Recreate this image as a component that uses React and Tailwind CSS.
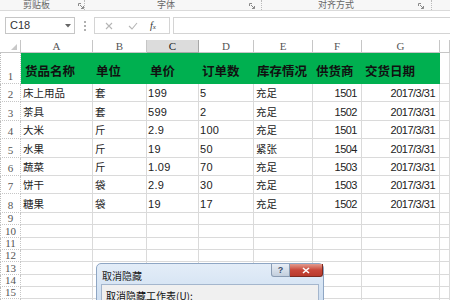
const cols = [21, 72, 54, 52, 55, 59, 49, 78]
const letters = ['A', 'B', 'C', 'D', 'E', 'F', 'G']

const head = ['货品名称', '单位', '单价', '订单数', '库存情况', '供货商', '交货日期']

const data = [
  ['床上用品', '套', '199', '5', '充足', '1501', '2017/3/31'],
  ['茶具', '套', '599', '2', '充足', '1502', '2017/3/31'],
  ['大米', '斤', '2.9', '100', '充足', '1501', '2017/3/31'],
  ['水果', '斤', '19', '50', '紧张', '1504', '2017/3/31'],
  ['蔬菜', '斤', '1.09', '70', '充足', '1503', '2017/3/31'],
  ['饼干', '袋', '2.9', '30', '充足', '1503', '2017/3/31'],
  ['糖果', '袋', '19', '17', '充足', '1502', '2017/3/31'],
]

const cjk = "font-['Noto_Sans_CJK_SC',sans-serif]"

const Launcher = () => (
  <svg width="6" height="6" viewBox="0 0 6 6" className="shrink-0">
    <path d="M0.5 0.5 H3 M0.5 0.5 V3" stroke="#8a8a8a" strokeWidth="1" fill="none" />
    <path d="M2 2 L5.5 5.5 M5.5 3 V5.5 H3" stroke="#8a8a8a" strokeWidth="1" fill="none" />
  </svg>
)

const Ribbon = () => (
  <div className={`h-[11px] flex items-start border-b border-[#dadada] bg-[#f7f7f7] text-[9px] leading-[10px] text-[#666] ${cjk}`}>
    <div className="w-[85px] h-full flex items-start border-r border-dotted border-[#bbb]">
      <span className="ml-[23px]">剪贴板</span>
      <span className="ml-[28px] mt-[3px]"><Launcher /></span>
    </div>
    <div className="w-[177px] h-full flex items-start border-r border-dotted border-[#bbb]">
      <span className="ml-[72px]">字体</span>
      <span className="ml-[74px] mt-[3px]"><Launcher /></span>
    </div>
    <div className="w-[170px] h-full flex items-start border-r border-dotted border-[#bbb]">
      <span className="ml-[56px]">对齐方式</span>
      <span className="ml-[64px] mt-[3px]"><Launcher /></span>
    </div>
  </div>
)

const FormulaBar = () => (
  <div className="h-[29px] flex items-start pt-[6px]">
    <div className="ml-[5px] w-[70px] h-[17px] border border-[#c6c6c6] bg-white flex items-center justify-between pl-[4px] pr-[3px]">
      <span className="text-[11px] text-[#333] font-['Liberation_Sans',sans-serif]">C18</span>
      <svg width="6" height="4" viewBox="0 0 6 4"><path d="M0 0 H6 L3 3.5 Z" fill="#666" /></svg>
    </div>
    <div className="ml-[9px] h-[17px] flex flex-col justify-center gap-[2px]">
      <span className="block w-[2px] h-[2px] bg-[#b0b0b0]" />
      <span className="block w-[2px] h-[2px] bg-[#b0b0b0]" />
      <span className="block w-[2px] h-[2px] bg-[#b0b0b0]" />
    </div>
    <div className="ml-[8px] w-[76px] h-[17px] border border-[#d4d4d4] bg-white flex items-center">
      <svg width="8" height="8" viewBox="0 0 8 8" className="ml-[10px]">
        <path d="M1 1 L7 7 M7 1 L1 7" stroke="#b5b5b5" strokeWidth="1.1" />
      </svg>
      <svg width="10" height="8" viewBox="0 0 10 8" className="ml-[15px]">
        <path d="M1 4 L4 7 L9 1" stroke="#b5b5b5" strokeWidth="1.1" fill="none" />
      </svg>
      <span className="ml-[12px] text-[10px] italic text-[#333] font-['Liberation_Serif',serif]">
        f<span className="text-[7px]">x</span>
      </span>
    </div>
    <div className="ml-[3px] flex-1 h-[17px] border-y border-l border-[#d4d4d4] bg-white" />
  </div>
)

const Grid = () => {
  const line = 'border-r border-b border-[#dadada]'
  const hdr = 'border-r border-b border-[#c6c6c6]'
  return (
    <div className="flex flex-col">
      <div className="flex h-[13px]">
        <div className={`w-[21px] shrink-0 ${hdr} bg-white relative`}>
          <svg width="6" height="6" viewBox="0 0 6 6" className="absolute right-[3px] bottom-[2px]">
            <path d="M6 0 V6 H0 Z" fill="#c8c8c8" />
          </svg>
        </div>
        {letters.map((l, i) => (
          <div
            key={l}
            style={{ width: cols[i + 1] }}
            className={`shrink-0 flex items-center justify-center text-[11px] font-['Liberation_Serif',serif] ${
              l === 'C' ? 'bg-[#dcdcdc] text-[#222] border-r border-b border-[#a8a8a8]' : `bg-white text-[#555] ${hdr}`
            }`}
          >
            {l}
          </div>
        ))}
        <div className={`flex-1 bg-white ${hdr}`} />
      </div>

      <div className="flex h-[31px]">
        <div className={`w-[21px] shrink-0 ${hdr} border-l border-l-[#bbb] border-dotted flex items-end justify-center text-[11px] text-[#555] font-['Liberation_Serif',serif] leading-[13px]`}>
          1
        </div>
        {head.map((h, i) => (
          <div
            key={h}
            style={{ width: cols[i + 1] }}
            className={`shrink-0 bg-[#00b050] flex items-center pt-[6px] ${i === 0 ? 'pl-[4px]' : 'pl-[3px]'} text-[12.5px] font-bold text-[#111] ${cjk}`}
          >
            {h}
          </div>
        ))}
        <div className={`flex-1 ${line}`} />
      </div>

      {data.map((r, ri) => (
        <div key={ri} className="flex h-[18.4px]">
          <div className={`w-[21px] shrink-0 ${hdr} border-l border-l-[#bbb] border-dotted flex items-end justify-center text-[11px] text-[#555] font-['Liberation_Serif',serif] leading-[14px]`}>
            {ri + 2}
          </div>
          {r.map((c, ci) => {
            const right = ci === 5 || ci === 6
            const num = ci === 2 || ci === 3 || right
            return (
              <div
                key={ci}
                style={{ width: cols[ci + 1] }}
                className={`shrink-0 ${line} flex items-end pb-[1px] leading-[14px] text-[#222] ${
                  right ? 'justify-end pr-[4px]' : ci === 2 || ci === 3 ? 'pl-[1px]' : 'pl-[2px]'
                } ${
                  num
                    ? `font-['Liberation_Sans',sans-serif] text-[11px] ${right ? 'tracking-[-0.5px] text-[10.5px]' : 'tracking-[0.3px]'}`
                    : `${cjk} text-[10.5px]`
                }`}
              >
                {c}
              </div>
            )
          })}
          <div className={`flex-1 ${line}`} />
        </div>
      ))}

      {[9, 10, 11, 12, 13, 14, 15, 16].map((n) => (
        <div key={n} className="flex h-[12.4px] shrink-0">
          <div className={`w-[21px] shrink-0 ${hdr} border-l border-l-[#bbb] border-dotted flex items-end justify-center text-[11px] text-[#555] font-['Liberation_Serif',serif] leading-[12px]`}>
            {n}
          </div>
          {cols.slice(1).map((w, i) => (
            <div key={i} style={{ width: w }} className={`shrink-0 ${line}`} />
          ))}
          <div className={`flex-1 ${line}`} />
        </div>
      ))}
    </div>
  )
}

const Dialog = () => (
  <div className={`absolute left-[96px] top-[263px] w-[228px] h-[50px] rounded-t-[5px] border border-[#8ea6c4] bg-gradient-to-b from-[#e3edf8] to-[#c9dbef] px-[4px] ${cjk}`}>
    <div className="h-[20px] flex items-start justify-between">
      <span className="mt-[7px] ml-[1px] text-[10px] leading-[10px] text-[#222]">取消隐藏</span>
      <div className="flex -mr-[4px]">
        <div className="w-[19px] h-[13px] rounded-bl-[3px] border border-[#8a9cb3] border-t-0 bg-gradient-to-b from-[#e8eef6] to-[#c3cfdd] flex items-center justify-center text-[9px] leading-[9px] text-[#3b4f6b] font-['Liberation_Sans',sans-serif] font-bold">
          ?
        </div>
        <div className="w-[33px] h-[13px] rounded-br-[3px] border border-[#7a2a20] border-t-0 border-l-0 bg-gradient-to-b from-[#e29a8e] via-[#c8473a] to-[#b93a2c] flex items-center justify-center">
          <svg width="8" height="7" viewBox="0 0 8 7">
            <path d="M1 1 L7 6 M7 1 L1 6" stroke="white" strokeWidth="1.6" />
          </svg>
        </div>
      </div>
    </div>
    <div className="h-[30px] border border-[#a4b6cd] bg-[#f0f0f0] pl-[4px] pt-[5px] text-[10px] leading-[11px] text-[#111]">
      取消隐藏工作表(U):
    </div>
  </div>
)

export default function App() {
  return (
    <div className="w-[450px] h-[300px] overflow-hidden relative bg-white">
      <Ribbon />
      <FormulaBar />
      <Grid />
      <Dialog />
    </div>
  )
}
